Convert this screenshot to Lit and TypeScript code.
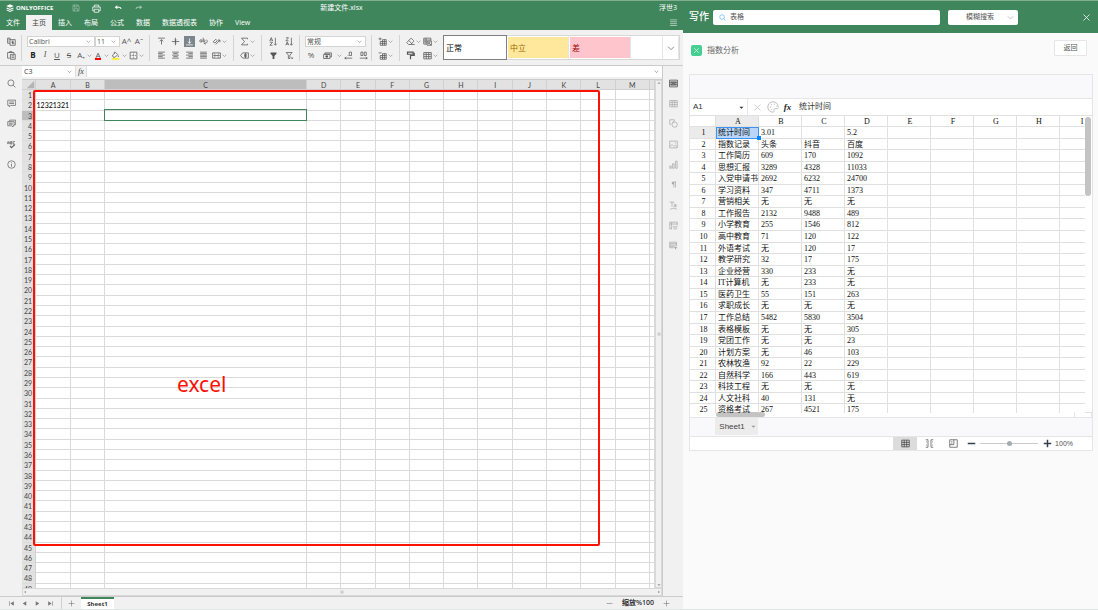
import { LitElement, html, css, svg, nothing } from "lit";
import { customElement, state } from "lit/decorators.js";
import { classMap } from "lit/directives/class-map.js";

const shapes: Record<string, unknown> = {
  copy: svg`<path d="M4 4V1.5H.8v6.8H4M2 3.5h1M2 5.5h1M4 3.5h7v7.5H4zM6 5.5h3M7.5 5.5v4M6 7.5h3v2"/>`,
  paste: svg`<path d="M3.5 9.5H.8V2h8.5v2M3.5 2V.8h3V2M4.5 4.5H11V11H4.500zM6 6.500h3.500M6 8.500h3.500"/>`,
  top: svg`<path d="M1.500 1.500h9M6 3.500V10M3.800 5.800 6 3.500l2.200 2.300"/>`,
  middle: svg`<path d="M1 6h10M6 1v10M4.500 3.500 6 5l1.500-1.500M4.500 8.500 6 7l1.500 1.500"/>`,
  bottom: svg`<path d="M1.500 10.500h9M6 2v6.500M3.800 6.200 6 8.500l2.200-2.300"/>`,
  wrap: svg`<path d="M1 5.500q0-2 1.500-2T4 5.500v1H2q-1 0-1-1M5.500 1v5.500q2.500.3 2.500-1.500T5.500 4M10 3.500c2 2.500 1 5-3 5M8.500 7 7 8.500 8.500 10"/>`,
  orient: svg`<path d="M1.500 6.500 5 3l2 2-3 3zM5 10l5.500-6M10.500 4v3M10.500 4H8"/>`,
  left: svg`<path d="M1.500 1.500h9M1.500 3.500h6M1.500 5.500h9M1.500 7.500h6M1.500 9.500h9"/>`,
  center: svg`<path d="M1.500 1.500h9M3 3.500h6M1.500 5.500h9M3 7.500h6M1.500 9.500h9"/>`,
  right: svg`<path d="M1.500 1.500h9M4.500 3.500h6M1.500 5.500h9M4.500 7.500h6M1.500 9.500h9"/>`,
  justify: svg`<path d="M1.500 1.500h9M1.500 3.500h9M1.500 5.500h9M1.500 7.500h9M1.500 9.500h9"/>`,
  merge: svg`<path d="M.8 2.500h10.400v7H.8zM3 2.500v1M3 8.500v1M9 2.500v1M9 8.500v1M2.500 6h7M4 4.500 2.500 6 4 7.500M8 4.500 9.500 6 8 7.500"/>`,
  sum: svg`<path d="M10 3V1.500H2L6 6l-4 4.500h8V9"/>`,
  named: svg`<path d="M3.500 2.500h7.700v7H3.500L.8 6zM5.500 4.500h3.500M5.500 6h3.500M5.500 7.500h3.500M7.300 2.500v7"/>`,
  sortAsc: svg`<path d="M1 5.500 3 .8l2 4.700M1.800 4h2.400M1.200 7h3.500L1.200 11h3.500M8.500 1v9.500M6.800 9l1.700 2 1.700-2"/>`,
  sortDesc: svg`<path d="M1.200 1h3.500L1.200 5h3.500M1 11l2-4.500L5 11M1.800 9.500h2.400M8.500 1v9.500M6.800 9l1.700 2 1.700-2"/>`,
  filter: svg`<path class="solid" d="M2 2h8v1.500L7.200 6.500V10.500H4.800V6.500L2 3.500z"/>`,
  clearFilter: svg`<path d="M1.500 2h8L6.500 5.500V10H4.500V5.500zM8.500 8.500l2 2M10.500 8.500l-2 2"/>`,
  currency: svg`<path d="M.8 4.500h8.500v5.500H.8zM2.500 4.500v-2H11.200v5.500H9.300M2.500 4l7 .2"/><circle class="solid" cx="5" cy="7.200" r="1.700"/>`,
  decLess: svg`<path d="M7 1.500h3v4.500h-3zM5 6h.8M1 9.500h10M3 8 1 9.500 3 11"/>`,
  decMore: svg`<path d="M2.500 1.500h2.700v4.500H2.500zM7 1.500h2.700v4.500H7zM1 9.500h10M9 8l2 1.500L9 11"/>`,
  insertCell: svg`<path d="M.8 2.500h4M2.800.8v3.500M6 3.500h5V11H3V6M3 6h8M3 8.500h8M6 3.500V11M8.500 3.500V11"/>`,
  deleteCell: svg`<path d="M.8 2.500h4M6 3.500h5V11H3V6M3 6h8M3 8.500h8M6 3.500V11M8.500 3.500V11"/>`,
  eraser: svg`<path d="M1 7.500 6 2.200q.8-.8 1.600 0L10 4.600q.8.8 0 1.600L6.200 10H3.500zM3.800 4.800 7.600 8.600M6 10h5.500"/>`,
  format: svg`<path d="M5 9.500H1V1.500h9.500V5M1 4h9.500M1 6.500h4M4 1.500v8M5.500 5.500h6V11h-6z"/><circle cx="8" cy="8" r="1.300"/><path d="m9 9 2 2"/>`,
  painter: svg`<path class="bold" d="M2 1.500h7.500v2.800H2zM9.500 3H11v3H6v5"/>`,
  table: svg`<path d="M1 2h10v8.500H1zM1 4.500h10M1 7.500h10M4.300 2v8.500M7.600 2v8.500"/>`,
  border: svg`<path d="M1.500 1.500h9v9h-9z"/><path stroke-dasharray="1 1" d="M6 2v8M2 6h8"/>`,
  fill: svg`<path d="M2 5.500 6 1.800l3 3-3.500 3.500H3zM4.500 3.300V1M9.800 6v2"/><path d="M1 10.500h10" style="stroke:#ffee00;stroke-width:2"/>`,
  search: svg`<circle cx="5.200" cy="5.200" r="4"/><path d="m8.200 8.200 3 3"/>`,
  comment: svg`<path d="M1 1.500h10.500v7H5l-2 2v-2H1zM3 4h6.500M3 6h6.500"/>`,
  chat: svg`<path d="M3.500 3.500V1.500h8v6H10M1 3.500h8.500v5.500h-1.500v1.500L6 9H1zM2.500 5.500h5M2.500 7h5"/>`,
  spell: svg`<path d="M1 5.500V2.500h2v3M1 4h2M4.800 2v3.500h1.700V2zM4.800 3.800h1.700M10.500 2H8.300v3.500h2.200"/><path class="bold" d="M4 8l2 2.200L10.500 6"/>`,
  info: svg`<circle cx="6" cy="6" r="5"/><path d="M6 5v4M6 2.800v1"/>`,
  cellset: svg`<path d="M.8 1.500h10.400v9H.8zM2.800 4.200h6.400v3.600H2.800zM.8 4.200h10.400M.8 7.800h10.400M4 6h4"/>`,
  shape: svg`<path d="M3 7H1V1h6v2"/><circle cx="7.500" cy="7.500" r="3.500"/><path d="M4.500 5 7 2.500"/>`,
  image: svg`<path d="M1 1.500h10v9H1zM1 9l3-3 2.500 2.500L8.500 7 11 9M7.500 4h1.500"/>`,
  chart: svg`<path d="M1 8h2v3H1zM4.800 5h2v6h-2zM8.800 1.500h2V11h-2z"/>`,
  para: svg`<path class="solid" d="M6 2H9.500V3H9v7H8V3H7v7H6V6Q3.500 6 3.500 4T6 2z"/>`,
  textart: svg`<path d="M1 1.500h6M4 1.500v6M6.500 4.500q3-1 3 1v2.200H8q-1.500 0-1.500-1.200T9.500 6M1.500 11q4.500-3 9 0"/>`,
  pivot: svg`<path d="M1 1.500h10v4M1 1.500v9h3M1 4h10M3.500 1.500v9M5.500 8h5.500M5.500 8 7 6.500M11 8 9.500 6.500M6 10.500h4.500"/>`,
  slicer: svg`<path d="M1 1.500h9v5M1 1.500V9h5M1 3.500h9M1 5.500h9M1 7.500h6"/><path class="solid" d="M6 7.500h5.500L9.500 9.500v2L8 10.500v-1z"/>`,
  save: svg`<path d="M1.500 1.500h7.500l1.500 1.500v7.500h-9zM3.500 1.500v3h4v-3M3.500 10.500V7h5v3.500"/>`,
  print: svg`<path d="M3 4V1.500h6V4M3 9H1V4h10v5H9M3 7h6v4H3z"/>`,
  undo: svg`<path class="solid" d="M1 5 5 1.800V8z"/><path class="bold" d="M4 5H8q2 0 2.500 2.500"/>`,
  redo: svg`<path class="solid" d="M11 5 7 1.800V8z"/><path class="bold" d="M8 5H4Q2 5 1.500 7.500"/>`,
  logo: svg`<path class="solid" d="M6 .5 11.500 3 6 5.500.5 3z"/><path class="bold" d="M1 6l5 2.300L11 6M1 8.800l5 2.300 5-2.300"/>`,
  menu: svg`<path d="M1.500 2.500h9M1.500 5h9M1.500 7.500h9M1.500 10h9"/>`,
  corner: svg`<path class="solid" d="M11 1v10H1z"/>`,
  chev: svg`<path d="M1.500 4 6 8.500 10.500 4"/>`,
  cross: svg`<path d="m2 2 8 8M10 2l-8 8"/>`,
  plus: svg`<path d="M6 1v10M1 6h10"/>`,
  minus: svg`<path d="M1 6h10"/>`,
  first: svg`<path class="solid" d="M10 2v8L4 6z"/><path d="M2.500 2v8"/>`,
  prev: svg`<path class="solid" d="M9 2v8L3 6z"/>`,
  next: svg`<path class="solid" d="M3 2v8l6-4z"/>`,
  last: svg`<path class="solid" d="M2 2v8l6-4z"/><path d="M9.500 2v8"/>`,
  down: svg`<path class="solid" d="M1 4h10L6 9z"/>`,
  up: svg`<path class="solid" d="M1 8h10L6 3z"/>`,
  palette: svg`<path d="M6 .8a5.200 5.200 0 1 0 0 10.400c1 0 1.200-.8.900-1.500-.4-1 .2-2 1.300-2H10c1 0 1.400-.8 1.200-2A5.200 5.200 0 0 0 6 .8z"/><path d="M3 6h1M4 3.500h1M7 3.200h1M9 5.200h.8M3.800 8.500h1"/>`,
  grid: svg`<path d="M1 1.500h10v9H1zM1 4.500h10M1 7.500h10M4.300 1.500v9M7.600 1.500v9"/>`,
  pagebreak: svg`<path d="M1 1h3v10H1M11 1H8v10h3M1.500 4h1M1.500 8h1M9.500 4h1M9.500 8h1"/>`,
  pagelayout: svg`<path d="M1 1h10v10H1zM1 7.500h5.500V1M3 3.500h1.500M3 5.500h1.500"/>`,
};

const icon = (name: string, size = 10) =>
  html`<svg viewBox="0 0 12 12" width=${size} height=${size} aria-hidden="true">${shapes[name]}</svg>`;

const shared = css`
  * { box-sizing: border-box; }
  button, input, select {
    font: inherit; color: inherit; background: none; border: 0; padding: 0; margin: 0;
    min-width: 0; border-radius: 0; appearance: none; outline: none;
  }
  button { display: flex; align-items: center; justify-content: center; white-space: nowrap; }
  svg { display: block; flex: none; fill: none; stroke: currentColor; stroke-width: 1; }
  .solid { fill: currentColor; stroke: none; }
  .bold { stroke-width: 1.6; }
  .picker { position: relative; display: flex; align-items: center; }
  .picker select { width: 100%; height: 100%; }
  .picker svg { position: absolute; right: 3px; pointer-events: none; }
  .grow { flex: 1; }
  table { display: grid; border-spacing: 0; }
  thead, tbody, tr { display: contents; }
  th, td { display: block; padding: 0; font-weight: 400; overflow: hidden; white-space: nowrap; min-width: 0; min-height: 0; }
`;

type Tool = [name: string, width: number];
const groups: { cls: string; rows: Tool[][] }[] = [
  { cls: "g-clip", rows: [[["copy", 22]], [["paste", 22]]] },
  {
    cls: "g-font",
    rows: [
      [["@font", 68], ["@size", 25], ["t:A^", 13], ["t:Aˇ", 12]],
      [["t:B", 12], ["t:I", 12], ["t:U", 12], ["t:S", 12], ["t:A₊", 12], ["chev", 5], ["t:A", 12], ["chev", 5], ["fill", 13], ["chev", 5], ["border", 12], ["chev", 5]],
    ],
  },
  {
    cls: "g-align",
    rows: [
      [["top", 14], ["middle", 14], ["bottom", 14], ["wrap", 14], ["orient", 12], ["chev", 5]],
      [["left", 14], ["center", 14], ["right", 14], ["justify", 14], ["merge", 12], ["chev", 5]],
    ],
  },
  { cls: "g-sum", rows: [[["sum", 12], ["chev", 5]], [["named", 12], ["chev", 5]]] },
  { cls: "g-sort", rows: [[["sortAsc", 16], ["sortDesc", 16]], [["filter", 16], ["clearFilter", 16]]] },
  {
    cls: "g-num",
    rows: [
      [["@format", 61]],
      [["t:%", 12], ["currency", 20], ["chev", 5], ["decLess", 12], ["decMore", 18]],
    ],
  },
  { cls: "g-cell", rows: [[["insertCell", 12], ["chev", 5]], [["deleteCell", 12], ["chev", 5]]] },
  {
    cls: "g-edit",
    rows: [
      [["eraser", 12], ["chev", 5], ["format", 12], ["chev", 5]],
      [["painter", 12], ["", 5], ["table", 12], ["chev", 5]],
    ],
  },
];

@customElement("main-editor")
class MainEditor extends LitElement {
  @state() private tab = 1;

  static styles = [shared, css`
    :host {
      display: flex; flex-direction: column; min-width: 0; min-height: 0; background: #f1f1f1; color: #444;
      font: 7px/10px "Open Sans", "Noto Sans CJK SC", sans-serif;
    }
    .title { display: grid; grid-template-columns: 1fr auto 1fr; height: 14px; align-items: center; background: #40865c; color: #fff; padding: 0 6px; }
    .brand { display: flex; align-items: center; gap: 2px; font-weight: 700; font-size: 6px; }
    .brand button { width: 11px; }
    .brand .quick { display: flex; gap: 10px; margin-left: 15px; }
    .dim { opacity: .5; }
    .user { text-align: right; }
    .tabs { display: flex; height: 15px; background: #40865c; color: #fff; }
    .tabs button { padding: 0 6px; }
    .tabs .on { background: #f1f1f1; color: #444; }
    .tabs .more { opacity: .7; padding: 0 5px; }
    .tools { display: flex; height: 36px; padding-top: 5px; border-bottom: 1px solid #cbcbcb; color: #555; }
    .group { display: grid; grid-template-rows: 12px 12px; row-gap: 2px; height: 26px; border-right: 1px solid #d4d4d4; flex: none; }
    .row { display: flex; align-items: center; }
    .row button { height: 11px; font-size: 8px; }
    .g-clip { width: 22px; }
    .g-font { width: 128px; padding-left: 5px; }
    .g-align { width: 84px; padding-left: 4px; }
    .g-sum { width: 28px; padding-left: 4px; }
    .g-sort { width: 38px; padding-left: 3px; }
    .g-num { width: 72px; padding-left: 5px; }
    .g-cell { width: 28px; padding-left: 4px; }
    .g-edit { width: 43px; padding-left: 4px; border: 0; }
    .row .lit { background: #7d858c; color: #fff; width: 11px; }
    .row .b { font-weight: 700; color: #222; }
    .row .i { font-style: italic; font-family: "Liberation Serif", serif; }
    .row .u { text-decoration: underline; }
    .row .s { text-decoration: line-through; }
    .row .red { box-shadow: inset 0 -2px #f00; }
    .row .picker { height: 11px; background: #fff; border: 1px solid #d4d4d4; }
    .picker select { padding-left: 1px; }
    .gallery { flex: 1; display: grid; grid-template-columns: 63px 62px 62px 1fr 16px; height: 25px; margin: 0 3px 0 0; background: #fff; border: 1px solid #d8d8d8; font-size: 8px; }
    .gallery button { justify-content: flex-start; padding-left: 2px; border: 1px solid #fff; border-right: 1px solid #e4e4e4; }
    .gallery .normal { border: 1px solid #7f7f7f; color: #000; margin: -1px 0 -1px -1px; }
    .gallery .neutral { background: #ffe89b; color: #9c6500; }
    .gallery .bad { background: #ffc5cc; color: #9c0006; }
    .gallery .open { justify-content: center; padding: 0; }
    .work { flex: 1; display: grid; grid-template-columns: 22px 1fr 21px; min-height: 0; }
    .side { display: grid; grid-auto-rows: 1fr; align-content: start; padding-top: 7px; justify-items: center; color: #666; }
    .side.l { height: 109px; }
    .rail { border-left: 1px solid #cbcbcb; }
    .side.r { height: 190px; color: #aaa; }
    .side .now { color: #444; }
    .sheet { display: grid; grid-template-rows: 11px 2px 1fr 8px; min-height: 0; min-width: 0; }
    .formula { display: flex; background: #fff; }
    .formula .name { width: 53px; }
    .formula .name input { width: 100%; padding-left: 2px; }
    .formula .fx { width: 12px; background: #f1f1f1; font: italic 8px/10px "Liberation Serif", serif; border: 1px solid #ddd; border-width: 0 1px; }
    .formula .value { flex: 1; }
    .formula .value input { width: 100%; }
    .area { position: relative; display: grid; grid-template-columns: 1fr 7px; min-height: 0; overflow: hidden; border-top: 1px solid #cbcbcb; }
    .clip { overflow: hidden; background: #fff; }
    .cells { grid-template-columns: 14px 35px 34px 202px repeat(10, 1fr) 5px; grid-template-rows: 10px repeat(49, 1fr); height: 514px; font-family: Lato, sans-serif; }
    .cells th { background: #e2e2e2; border-right: 1px solid #d0d0d0; border-bottom: 1px solid #d0d0d0; text-align: center; line-height: 10px; }
    .cells tbody th { text-align: right; padding-right: 3px; border-bottom-color: #dcdcdc; }
    .cells td { border-right: 1px solid #dadada; border-bottom: 1px solid #dadada; }
    .cells tr .hot { background: #bdbdbd; }
    .cells td.text { color: #000; text-align: right; padding-right: 1px; }
    .cells td.cur { outline: 1px solid #40865c; border-color: transparent; margin: -1px 1px 1px 0; z-index: 1; }
    .cells .corner { display: flex; justify-content: flex-end; align-items: flex-end; color: #b4b4b4; }
    .vbar, .hbar { display: flex; justify-content: space-between; align-items: center; background: #f1f1f1; color: #999; border: 1px solid #d8d8d8; }
    .vbar { flex-direction: column; }
    .mark { position: absolute; left: 11px; top: 10px; right: 62px; height: 456px; border: 2px solid #fb1205; border-radius: 2px; color: #fb1205; pointer-events: none; z-index: 2; }
    .mark span { position: absolute; left: 142px; top: 278px; font: 21px/28px "Noto Sans", sans-serif; }
    .status { display: flex; align-items: center; height: 13px; border-top: 1px solid #cbcbcb; padding-left: 5px; color: #777; }
    .status button { width: 13px; height: 12px; }
    .status .add { width: 20px; margin-left: 4px; border-left: 1px solid #d0d0d0; }
    .status .sheet1 { width: 33px; background: #fff; border-top: 2px solid #40865c; color: #333; font-weight: 700; font-size: 6px; }
    .status .zoom { color: #333; font-weight: 600; width: 44px; text-align: center; }
    .status .out { margin-right: 10px; }
  `];

  private tool([name, width]: Tool) {
    const size = `width:${width}px`;
    if (name === "") return html`<span style=${size}></span>`;
    if (name[0] === "@") {
      const value = { "@font": "Calibri", "@size": "11", "@format": "常规" }[name];
      return html`<label class="picker" style=${size}>
        <select aria-label=${name.slice(1)}><option>${value}</option></select>${icon("chev", 5)}</label>`;
    }
    if (name.startsWith("t:")) {
      const t = name.slice(2);
      return html`<button style=${size} aria-label=${t}
        class=${classMap({ b: t === "B", i: t === "I", u: t === "U", s: t === "S" })}
        ><span class=${t === "A" ? "red" : ""}>${t}</span></button>`;
    }
    if (name === "bottom") return html`<span class="row" style="${size};justify-content:center"><button class="lit" aria-label=${name}>${icon(name, 9)}</button></span>`;
    return html`<button style=${size} aria-label=${name}>${icon(name, name === "chev" ? 5 : 9)}</button>`;
  }

  render() {
    const cols = "ABCDEFGHIJKLM".split("");
    return html`
      <header class="title">
        <div class="brand">${icon("logo", 8)}<span>ONLYOFFICE</span>
          <div class="quick">
            <button class="dim" aria-label="保存">${icon("save", 8)}</button>
            <button aria-label="打印">${icon("print", 9)}</button>
            <button aria-label="撤销">${icon("undo", 8)}</button>
            <button class="dim" aria-label="重做">${icon("redo", 8)}</button>
          </div>
        </div>
        <span>新建文件.xlsx</span><span class="user">浮世3</span>
      </header>
      <nav class="tabs">
        ${["文件", "主页", "插入", "布局", "公式", "数据", "数据透视表", "协作", "View"].map((t, i) =>
          html`<button class=${classMap({ on: i === this.tab })} @click=${() => (this.tab = i)}>${t}</button>`)}
        <span class="grow"></span><button class="more" aria-label="菜单">${icon("menu", 9)}</button>
      </nav>
      <div class="tools">
        ${groups.map((g) => html`<div class="group ${g.cls}">
          ${g.rows.map((r) => html`<div class="row">${r.map((t) => this.tool(t))}</div>`)}</div>`)}
        <div class="gallery">
          <button class="normal">正常</button><button class="neutral">中立</button>
          <button class="bad">差</button><button aria-label="样式"></button>
          <button class="open" aria-label="更多样式">${icon("chev", 8)}</button>
        </div>
      </div>
      <div class="work">
        <div class="side l">
          ${["search", "comment", "chat", "spell", "info"].map((n) => html`<button aria-label=${n}>${icon(n, 9)}</button>`)}
        </div>
        <div class="sheet">
          <div class="formula">
            <label class="picker name"><input aria-label="名称框" value="C3" />${icon("chev", 5)}</label>
            <button class="fx">fx</button>
            <label class="picker value"><input aria-label="编辑栏" />${icon("chev", 5)}</label>
          </div>
          <span></span>
          <div class="area">
            <div class="clip">
              <table class="cells">
                <thead><tr><th class="corner">${icon("corner", 9)}</th>
                  ${cols.map((c) => html`<th class=${classMap({ hot: c === "C" })}>${c}</th>`)}<th></th></tr></thead>
                <tbody>
                  ${Array.from({ length: 49 }, (_, r) => html`<tr>
                    <th class=${classMap({ hot: r === 2 })}>${r + 1}</th>
                    ${[...cols, ""].map((c) => html`<td class=${classMap({ text: r === 1 && c === "A", cur: r === 2 && c === "C" })}
                      >${r === 1 && c === "A" ? "12321321" : nothing}</td>`)}</tr>`)}
                </tbody>
              </table>
            </div>
            <div class="vbar">${icon("up", 4)}${icon("menu", 4)}${icon("down", 4)}</div>
            <div class="mark"><span>excel</span></div>
          </div>
          <div class="hbar">${icon("prev", 4)}${icon("menu", 4)}${icon("next", 4)}</div>
        </div>
        <div class="rail"><div class="side r">
          ${["cellset", "table", "shape", "image", "chart", "para", "textart", "pivot", "slicer"].map((n, i) =>
            html`<button class=${i ? "" : "now"} aria-label=${n}>${icon(n, 9)}</button>`)}
        </div></div>
      </div>
      <footer class="status">
        ${["first", "prev", "next", "last"].map((n) => html`<button aria-label=${n}>${icon(n, 7)}</button>`)}
        <button class="add" aria-label="添加工作表">${icon("plus", 7)}</button>
        <button class="sheet1">Sheet1</button><span class="grow"></span>
        <button aria-label="缩小">${icon("minus", 7)}</button><span class="zoom">缩放%100</span>
        <button class="out" aria-label="放大">${icon("plus", 7)}</button>
      </footer>`;
  }
}

const records: string[][] = [
  ["统计时间", "3.01", "", "5.2"],
  ["指数记录", "头条", "抖音", "百度"],
  ["工作简历", "609", "170", "1092"],
  ["思想汇报", "3289", "4328", "11033"],
  ["入党申请书", "2692", "6232", "24700"],
  ["学习资料", "347", "4711", "1373"],
  ["营销相关", "无", "无", "无"],
  ["工作报告", "2132", "9488", "489"],
  ["小学教育", "255", "1546", "812"],
  ["高中教育", "71", "120", "122"],
  ["外语考试", "无", "120", "17"],
  ["教学研究", "32", "17", "175"],
  ["企业经营", "330", "233", "无"],
  ["IT计算机", "无", "233", "无"],
  ["医药卫生", "55", "151", "263"],
  ["求职成长", "无", "无", "无"],
  ["工作总结", "5482", "5830", "3504"],
  ["表格模板", "无", "无", "305"],
  ["党团工作", "无", "无", "23"],
  ["计划方案", "无", "46", "103"],
  ["农林牧渔", "92", "22", "229"],
  ["自然科学", "166", "443", "619"],
  ["科技工程", "无", "无", "无"],
  ["人文社科", "40", "131", "无"],
  ["资格考试", "267", "4521", "175"],
];

@customElement("writing-panel")
class WritingPanel extends LitElement {
  static styles = [shared, css`
    :host { display: flex; flex-direction: column; min-width: 0; background: #fafafa; color: #555; font: 8px/12px "Liberation Sans", "Noto Sans CJK SC", sans-serif; }
    .bar { display: flex; align-items: center; height: 32px; background: #40865c; padding: 0 7px 0 6px; font-size: 7px; }
    .bar h1 { margin: 0 4px 0 0; color: #fff; font-size: 10px; font-weight: 500; }
    .find { flex: 1; display: flex; align-items: center; gap: 4px; height: 15px; background: #fff; border-radius: 2px; padding-left: 6px; }
    .find svg { color: #409eff; }
    .find input { flex: 1; }
    .mode { width: 70px; height: 15px; margin: 0 64px 0 8px; background: #fff; border-radius: 2px; }
    .mode select { text-align: center; padding-right: 6px; }
    .mode svg { color: #999; right: 4px; }
    .close { color: #fff; }
    .head { display: flex; align-items: flex-end; gap: 5px; height: 16px; margin: 7px 11px 18px 8px; }
    .badge { width: 11px; height: 11px; background: #45cf93; border-radius: 2px; color: #fff; display: grid; place-items: center; }
    .head h2 { margin: 0; font-size: 8px; line-height: 11px; font-weight: 400; color: #666; }
    .back { width: 33px; height: 16px; background: #fff; border: 1px solid #e6e6e6; border-radius: 1px; font-size: 7px; }
    .panel { margin: 0 5px 0 6px; border: 1px solid #e6e6e6; background: #fff; }
    .strip { height: 24px; background: #f9f9fb; border-bottom: 1px solid #e6e6e6; }
    .formula { display: flex; align-items: center; height: 16px; color: #333; }
    .name { width: 58px; height: 100%; border-right: 1px solid #e6e6e6; }
    .name input { width: 100%; padding-left: 3px; }
    .formula button { width: 15px; color: #c0c0c0; }
    .formula .first { margin-left: 2px; }
    .formula .fx { color: #222; font: italic 700 9px/12px "Liberation Serif", serif; }
    .formula .value { flex: 1; padding-left: 4px; }
    .view { position: relative; display: grid; grid-template-columns: 1fr 7px; height: 298px; border-top: 1px solid #e0e0e0; }
    .clip { overflow: hidden; }
    .grid { grid-template-columns: 26px repeat(9, 43px); grid-template-rows: 11px repeat(25, 1fr); height: 300px; color: #111; font: 8px/11px "Liberation Serif", "Noto Sans CJK SC", serif; }
    .grid th, .grid td { border-right: 1px solid #e0e0e0; border-bottom: 1px solid #e0e0e0; }
    .grid th { text-align: center; padding-left: 2px; }
    .grid td { padding-left: 2px; }
    .grid .hot { background: #ebebeb; }
    .grid .sel { background: #b9d6f8; border: 1px solid #3d94f0; padding-left: 1px; line-height: 10px; }
    .knob { position: absolute; left: 67px; top: 20px; width: 4px; height: 4px; background: #0a84ff; }
    .vbar { background: #fff; border-bottom: 1px solid #e0e0e0; }
    .vthumb { width: 6px; height: 79px; margin-top: 1px; border-radius: 3px; background: #c3c3c3; }
    .hbar { display: flex; justify-content: space-between; height: 6px; padding-left: 26px; border-bottom: 1px solid #e6e6e6; margin-top: -1px; }
    .hthumb { width: 49px; height: 5px; border-radius: 3px; background: #c3c3c3; }
    .hend { width: 18px; border: 1px solid #e6e6e6; border-width: 0 1px; }
    .sheets { height: 19px; background: #f9f9fb; padding-left: 25px; border-bottom: 1px solid #e6e6e6; }
    .sheets button { width: 43px; height: 17px; background: #ececec; gap: 6px; color: #444; padding-left: 2px; }
    .sheets svg { color: #999; }
    .foot { display: flex; align-items: center; justify-content: flex-end; height: 13px; padding-right: 19px; font-size: 7px; }
    .foot button { width: 24px; height: 13px; }
    .foot .on { background: #dcdcdc; color: #444; }
    .foot .step { width: 12px; color: #333f50; }
    .foot .step svg { stroke-width: 2; }
    .foot input { width: 58px; height: 10px; margin: 0 3px; background: linear-gradient(#ccc, #ccc) center / 100% 1px no-repeat; }
    .foot input::-webkit-slider-thumb { appearance: none; width: 5px; height: 5px; border-radius: 50%; background: #a3adad; }
    .foot span { margin-left: 2px; }
  `];

  render() {
    return html`
      <header class="bar">
        <h1>写作</h1>
        <label class="find">${icon("search", 7)}<input aria-label="搜索" value="表格" /></label>
        <label class="picker mode"><select aria-label="搜索方式"><option>模糊搜索</option></select>${icon("chev", 7)}</label>
        <button class="close" aria-label="关闭">${icon("cross", 9)}</button>
      </header>
      <div class="head">
        <span class="badge">${icon("cross", 7)}</span><h2>指数分析</h2><span class="grow"></span>
        <button class="back">返回</button>
      </div>
      <section class="panel">
        <div class="strip"></div>
        <div class="formula">
          <label class="picker name"><input aria-label="单元格" value="A1" />${icon("down", 5)}</label>
          <button class="first" aria-label="取消">${icon("cross", 9)}</button>
          <button aria-label="配色">${icon("palette", 12)}</button>
          <button class="fx">fx</button>
          <input class="value" aria-label="内容" value="统计时间" />
        </div>
        <div class="view">
          <div class="clip">
            <table class="grid">
              <thead><tr><th></th>${"ABCDEFGHI".split("").map((c) => html`<th class=${classMap({ hot: c === "A" })}>${c}</th>`)}</tr></thead>
              <tbody>
                ${records.map((row, r) => html`<tr><th class=${classMap({ hot: r === 0 })}>${r + 1}</th>
                  ${Array.from({ length: 9 }, (_, c) => html`<td class=${classMap({ sel: r === 0 && c === 0 })}>${row[c] ?? nothing}</td>`)}</tr>`)}
              </tbody>
            </table>
          </div>
          <div class="vbar"><div class="vthumb"></div></div>
          <span class="knob"></span>
        </div>
        <div class="hbar"><div class="hthumb"></div><div class="hend"></div></div>
        <div class="sheets"><button>Sheet1 ${icon("down", 5)}</button></div>
        <div class="foot">
          <button class="on" aria-label="普通">${icon("grid", 9)}</button>
          <button aria-label="分页">${icon("pagebreak", 9)}</button>
          <button aria-label="页面">${icon("pagelayout", 9)}</button>
          <button class="step" aria-label="缩小">${icon("minus", 9)}</button>
          <input type="range" aria-label="缩放" min="0" max="200" value="100" />
          <button class="step" aria-label="放大">${icon("plus", 9)}</button>
          <span>100%</span>
        </div>
      </section>`;
  }
}

@customElement("app-root")
class AppRoot extends LitElement {
  static styles = css`
    :host {
      display: grid; grid-template-columns: 683fr 415fr; height: 100vh; box-sizing: border-box; overflow: hidden;
      border-top: 1px solid #7fae91; border-bottom: 1px solid #dfe7e5;
    }
  `;
  render() {
    return html`<main-editor></main-editor><writing-panel></writing-panel>`;
  }
}
